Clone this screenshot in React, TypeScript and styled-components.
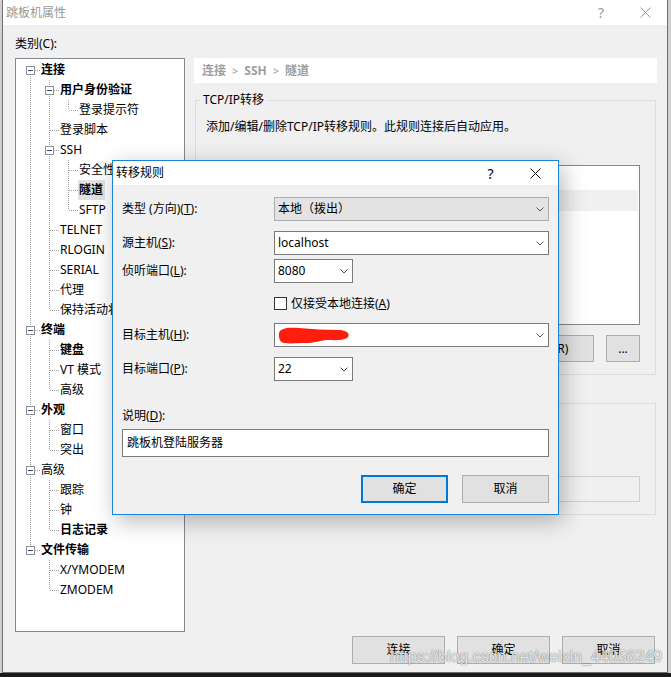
import React from "react";
import styled, { createGlobalStyle } from "styled-components";

type TreeNode = {
  label: string;
  level: number;
  bold?: boolean;
  open?: boolean;
  selected?: boolean;
};

const TREE: TreeNode[] = [
  { label: "连接", level: 0, bold: true, open: true },
  { label: "用户身份验证", level: 1, bold: true, open: true },
  { label: "登录提示符", level: 2 },
  { label: "登录脚本", level: 1 },
  { label: "SSH", level: 1, open: true },
  { label: "安全性", level: 2 },
  { label: "隧道", level: 2, bold: true, selected: true },
  { label: "SFTP", level: 2 },
  { label: "TELNET", level: 1 },
  { label: "RLOGIN", level: 1 },
  { label: "SERIAL", level: 1 },
  { label: "代理", level: 1 },
  { label: "保持活动状态", level: 1 },
  { label: "终端", level: 0, bold: true, open: true },
  { label: "键盘", level: 1, bold: true },
  { label: "VT 模式", level: 1 },
  { label: "高级", level: 1 },
  { label: "外观", level: 0, bold: true, open: true },
  { label: "窗口", level: 1 },
  { label: "突出", level: 1 },
  { label: "高级", level: 0, open: true },
  { label: "跟踪", level: 1 },
  { label: "钟", level: 1 },
  { label: "日志记录", level: 1, bold: true },
  { label: "文件传输", level: 0, bold: true, open: true },
  { label: "X/YMODEM", level: 1 },
  { label: "ZMODEM", level: 1 },
];

function hasNextSibling(idx: number) {
  const lvl = TREE[idx].level;
  for (let j = idx + 1; j < TREE.length; j++) {
    if (TREE[j].level < lvl) return false;
    if (TREE[j].level === lvl) return true;
  }
  return false;
}

const rows = TREE.map((node, i) => {
  const guides: boolean[] = [];
  for (let k = 0; k < node.level; k++) {
    let a = i - 1;
    while (TREE[a].level !== k) a--;
    guides.push(hasNextSibling(a));
  }
  return { ...node, guides, hasNext: hasNextSibling(i), first: i === 0 };
});

const GlobalStyle = createGlobalStyle`
  html, body {
    margin: 0;
    padding: 0;
  }
  body {
    width: 671px;
    height: 677px;
    overflow: hidden;
    background: #cfcfcf;
    font-family: "Noto Sans", "Noto Sans CJK SC", sans-serif;
    font-size: 12px;
    color: #000;
  }
`;

const Screen = styled.div`
  position: relative;
  height: 673px;
  display: flex;
`;

const BottomStrip = styled.div`
  height: 4px;
  background: #1b1b1b;
`;

const Window = styled.div`
  margin-left: 2px;
  width: 666px;
  height: 673px;
  box-sizing: border-box;
  border: 1px solid #6f6f6f;
  border-top: none;
  background: #f0f0f0;
  display: flex;
  flex-direction: column;
`;

const TitleBar = styled.div`
  height: 25px;
  flex: none;
  background: #fff;
  display: flex;
  align-items: center;
`;

const Title = styled.div<{ $active?: boolean }>`
  flex: 1;
  padding-left: 3px;
  line-height: 16px;
  color: ${(p) => (p.$active ? "#000" : "#999")};
`;

const CaptionButton = styled.div<{ $w: number; $active?: boolean }>`
  width: ${(p) => p.$w}px;
  height: 100%;
  display: flex;
  align-items: center;
  justify-content: center;
  font-size: 14px;
  color: ${(p) => (p.$active ? "#000" : "#999")};
`;

const CloseIcon = ({ color }: { color: string }) => (
  <svg width="11" height="11" viewBox="0 0 11 11">
    <path d="M0.5 0.5 L10.5 10.5 M10.5 0.5 L0.5 10.5" stroke={color} strokeWidth="1" />
  </svg>
);

const Body = styled.div`
  flex: 1;
  display: flex;
  flex-direction: column;
  padding: 11px 10px 8px 12px;
`;

const CategoryLabel = styled.div`
  line-height: 16px;
  margin-bottom: 6px;
`;

const Main = styled.div`
  flex: 1;
  display: flex;
  gap: 9px;
`;

const Tree = styled.div`
  width: 170px;
  height: 574px;
  flex: none;
  box-sizing: border-box;
  border: 1px solid #828790;
  background: #fff;
  padding-top: 1px;
  overflow: hidden;
`;

const TreeRow = styled.div`
  display: flex;
  align-items: center;
  height: 20px;
  padding-left: 5px;
  white-space: nowrap;
`;

const TreeLabel = styled.span<{ $bold?: boolean; $selected?: boolean }>`
  padding: 0 2px 0 1px;
  line-height: 20px;
  font-weight: ${(p) => (p.$bold ? 700 : 400)};
  background: ${(p) => (p.$selected ? "#e2e2e2" : "transparent")};
`;

const CellSvg = styled.svg`
  flex: none;
  display: block;
  shape-rendering: crispEdges;
  line {
    stroke: #a0a0a0;
    stroke-width: 1;
    stroke-dasharray: 1 1;
  }
`;

const TreeCell = ({
  pipe,
  up,
  down,
  stem,
  box,
}: {
  pipe?: boolean;
  up?: boolean;
  down?: boolean;
  stem?: boolean;
  box?: boolean;
}) => (
  <CellSvg width="19" height="20" viewBox="0 0 19 20">
    {pipe && <line x1="9.5" y1="0" x2="9.5" y2="20" />}
    {up && <line x1="9.5" y1="0" x2="9.5" y2="10" />}
    {down && <line x1="9.5" y1="10" x2="9.5" y2="20" />}
    {stem && <line x1="10" y1="10.5" x2="19" y2="10.5" />}
    {box && (
      <>
        <rect x="5.5" y="6.5" width="8" height="8" fill="#fff" stroke="#8f8f8f" />
        <path d="M7 10.5 H12" stroke="#2c4f8a" strokeWidth="1" />
      </>
    )}
  </CellSvg>
);

const RightPane = styled.div`
  flex: 1;
  display: flex;
  flex-direction: column;
`;

const Breadcrumb = styled.div`
  height: 25px;
  background: #fff;
  padding-left: 8px;
  display: flex;
  align-items: center;
  gap: 6px;
  color: #9d9d9d;
  font-weight: 700;
  line-height: 16px;
`;

const Chevron = styled.span`
  font-size: 11px;
  font-weight: 400;
`;

const Group = styled.fieldset<{ $top: number }>`
  margin: ${(p) => p.$top}px 1px 0 1px;
  border: 1px solid #dcdcdc;
  padding: 0 4px;
  min-inline-size: 0;
`;

const Legend = styled.legend`
  padding: 0 3px;
  line-height: 16px;
`;

const GroupInner = styled.div`
  padding: 0 11px 12px 6px;
  display: flex;
  flex-direction: column;
`;

const Text = styled.div<{ $top?: number }>`
  margin-top: ${(p) => p.$top || 0}px;
  line-height: 16px;
  white-space: nowrap;
`;

const ListBox = styled.div`
  margin-top: 30px;
  height: 160px;
  box-sizing: border-box;
  border: 1px solid #828790;
  background: #fff;
  padding-right: 1px;
`;

const ListHeader = styled.div`
  height: 24px;
`;

const ListItem = styled.div`
  height: 21px;
  background: #f0f0f0;
`;

const ButtonRow = styled.div<{ $top?: number; $gap: number }>`
  margin-top: ${(p) => p.$top || 0}px;
  display: flex;
  justify-content: flex-end;
  gap: ${(p) => p.$gap}px;
`;

const Button = styled.div<{ $w: number; $h?: number; $default?: boolean }>`
  width: ${(p) => p.$w}px;
  height: ${(p) => p.$h || 28}px;
  box-sizing: border-box;
  display: flex;
  align-items: center;
  justify-content: center;
  background: #e1e1e1;
  border: ${(p) => (p.$default ? "2px solid #0078d7" : "1px solid #adadad")};
  line-height: 16px;
`;

const DisabledInput = styled.div`
  margin-top: 13px;
  margin-left: 90px;
  height: 26px;
  box-sizing: border-box;
  border: 1px solid #cfcfcf;
  background: #f0f0f0;
`;

const Footer = styled.div`
  margin-top: auto;
  margin-right: 2px;
  display: flex;
  justify-content: flex-end;
  gap: 12px;
`;

const Dialog = styled.div`
  position: absolute;
  left: 112px;
  top: 160px;
  width: 447px;
  box-sizing: border-box;
  border: 1px solid #1883d7;
  background: #f0f0f0;
  box-shadow: 4px 6px 22px rgba(0, 0, 0, 0.28);
  display: flex;
  flex-direction: column;
`;

const DialogTitleBar = styled(TitleBar)`
  height: 24px;
`;

const DialogBody = styled.div`
  padding: 12px 9px 11px 9px;
  display: flex;
  flex-direction: column;
`;

const FormRow = styled.div<{ $top?: number }>`
  margin-top: ${(p) => p.$top || 0}px;
  height: 24px;
  display: flex;
  align-items: center;
`;

const FieldLabel = styled.div`
  width: 152px;
  flex: none;
  line-height: 16px;
  white-space: nowrap;
`;

const Combo = styled.div<{ $w: number; $disabled?: boolean }>`
  width: ${(p) => p.$w}px;
  height: 24px;
  box-sizing: border-box;
  display: flex;
  align-items: center;
  padding: 0 4px 0 3px;
  border: 1px solid ${(p) => (p.$disabled ? "#adadad" : "#7a7a7a")};
  background: ${(p) => (p.$disabled ? "#e3e3e3" : "#fff")};
`;

const ComboText = styled.span`
  flex: 1;
  display: flex;
  align-items: center;
  line-height: 16px;
  white-space: nowrap;
`;

const DropArrow = () => (
  <svg width="8" height="5" viewBox="0 0 8 5">
    <polyline points="0.5,0.5 4,4 7.5,0.5" fill="none" stroke="#555" strokeWidth="1" />
  </svg>
);

const Scribble = () => (
  <svg width="72" height="17" viewBox="0 0 72 17" style={{ display: "block" }}>
    <path
      d="M1 8 C0 1 10 0 21 1 C34 2 48 3 60 3 C70 3 73 8 69 11 C64 14 56 13 48 13 C40 14 36 16 28 16 C20 16 12 17 6 16 C2 15 1 12 1 8 Z"
      fill="#ff1e0e"
    />
  </svg>
);

const CheckRow = styled.div<{ $top: number }>`
  margin-top: ${(p) => p.$top}px;
  height: 24px;
  padding-left: 152px;
  display: flex;
  align-items: center;
  gap: 4px;
`;

const CheckBox = styled.span`
  width: 13px;
  height: 13px;
  box-sizing: border-box;
  border: 1px solid #333;
  background: #fff;
`;

const TextBox = styled.div`
  margin-top: 5px;
  height: 28px;
  box-sizing: border-box;
  border: 1px solid #7a7a7a;
  background: #fff;
  padding-left: 4px;
  display: flex;
  align-items: center;
  line-height: 16px;
`;

const Watermark = styled.div`
  position: absolute;
  left: 390px;
  top: 649px;
  font-family: "Liberation Sans", Arial, sans-serif;
  font-size: 16px;
  line-height: 16px;
  color: rgba(255, 255, 255, 0.85);
  text-shadow: 0 0 1px rgba(0, 0, 0, 0.55), 0 0 2px rgba(0, 0, 0, 0.2);
  white-space: nowrap;
`;

export default function App() {
  return (
    <>
      <GlobalStyle />
      <Screen>
        <Window>
          <TitleBar>
            <Title>跳板机属性</Title>
            <CaptionButton $w={44}>?</CaptionButton>
            <CaptionButton $w={44}>
              <CloseIcon color="#999" />
            </CaptionButton>
          </TitleBar>
          <Body>
            <CategoryLabel>类别(C):</CategoryLabel>
            <Main>
              <Tree>
                {rows.map((r, i) => (
                  <TreeRow key={i}>
                    {r.guides.map((g, k) => (
                      <TreeCell key={k} pipe={g} />
                    ))}
                    <TreeCell up={!r.first} down={r.hasNext} stem box={r.open} />
                    <TreeLabel $bold={r.bold} $selected={r.selected}>
                      {r.label}
                    </TreeLabel>
                  </TreeRow>
                ))}
              </Tree>
              <RightPane>
                <Breadcrumb>
                  <span>连接</span>
                  <Chevron>&gt;</Chevron>
                  <span>SSH</span>
                  <Chevron>&gt;</Chevron>
                  <span>隧道</span>
                </Breadcrumb>
                <Group $top={9}>
                  <Legend>TCP/IP转移</Legend>
                  <GroupInner>
                    <Text $top={11}>添加/编辑/删除TCP/IP转移规则。此规则连接后自动应用。</Text>
                    <ListBox>
                      <ListHeader />
                      <ListItem />
                    </ListBox>
                    <ButtonRow $top={10} $gap={12}>
                      <Button $w={90} $h={27}>添加(A)</Button>
                      <Button $w={90} $h={27}>编辑(E)</Button>
                      <Button $w={90} $h={27}>删除(R)</Button>
                      <Button $w={34} $h={27}>...</Button>
                    </ButtonRow>
                  </GroupInner>
                </Group>
                <Group $top={20}>
                  <Legend>X11转移</Legend>
                  <GroupInner>
                    <Text $top={10}>转移X11连接到(X):</Text>
                    <Text $top={10}>X DISPLAY:</Text>
                    <DisabledInput />
                  </GroupInner>
                </Group>
                <Footer>
                  <Button $w={93}>连接</Button>
                  <Button $w={93}>确定</Button>
                  <Button $w={93}>取消</Button>
                </Footer>
              </RightPane>
            </Main>
          </Body>
        </Window>

        <Dialog>
          <DialogTitleBar>
            <Title $active>转移规则</Title>
            <CaptionButton $w={45} $active>?</CaptionButton>
            <CaptionButton $w={45} $active>
              <CloseIcon color="#111" />
            </CaptionButton>
          </DialogTitleBar>
          <DialogBody>
            <FormRow>
              <FieldLabel>
                类型 (方向)(<u>T</u>):
              </FieldLabel>
              <Combo $w={275} $disabled>
                <ComboText>本地（拨出）</ComboText>
                <DropArrow />
              </Combo>
            </FormRow>
            <FormRow $top={10}>
              <FieldLabel>
                源主机(<u>S</u>):
              </FieldLabel>
              <Combo $w={275}>
                <ComboText>localhost</ComboText>
                <DropArrow />
              </Combo>
            </FormRow>
            <FormRow $top={4}>
              <FieldLabel>
                侦听端口(<u>L</u>):
              </FieldLabel>
              <Combo $w={79}>
                <ComboText>8080</ComboText>
                <DropArrow />
              </Combo>
            </FormRow>
            <CheckRow $top={8}>
              <CheckBox />
              <span>
                仅接受本地连接(<u>A</u>)
              </span>
            </CheckRow>
            <FormRow $top={8}>
              <FieldLabel>
                目标主机(<u>H</u>):
              </FieldLabel>
              <Combo $w={275}>
                <ComboText>
                  <Scribble />
                </ComboText>
                <DropArrow />
              </Combo>
            </FormRow>
            <FormRow $top={10}>
              <FieldLabel>
                目标端口(<u>P</u>):
              </FieldLabel>
              <Combo $w={79}>
                <ComboText>22</ComboText>
                <DropArrow />
              </Combo>
            </FormRow>
            <Text $top={27}>
              说明(<u>D</u>):
            </Text>
            <TextBox>跳板机登陆服务器</TextBox>
            <ButtonRow $top={18} $gap={14}>
              <Button $w={87} $default>
                确定
              </Button>
              <Button $w={87}>取消</Button>
            </ButtonRow>
          </DialogBody>
        </Dialog>

        <Watermark>https://blog.csdn.net/weixin_44056249</Watermark>
      </Screen>
      <BottomStrip />
    </>
  );
}
